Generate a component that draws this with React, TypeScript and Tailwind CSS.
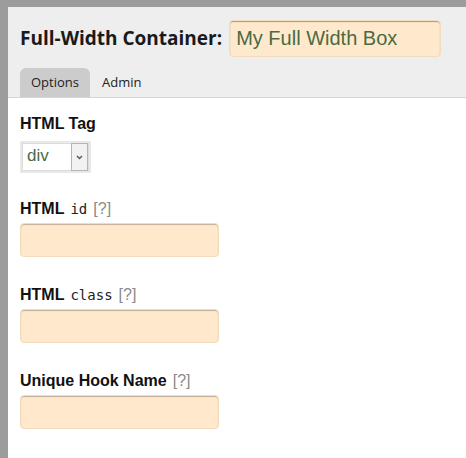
import React from "react";

const arial = { fontFamily: '"Liberation Sans", Arial, sans-serif' };

function Field({ label, mono, help }: { label: React.ReactNode; mono?: string; help?: boolean }) {
  return (
    <div className="flex flex-col">
      <div className="flex items-baseline h-[18px] text-[16px] leading-[18px] font-bold text-[#111]" style={arial}>
        <span>{label}</span>
        {mono && (
          <span className="ml-[6px] font-normal text-[14px] text-[#222]" style={{ fontFamily: '"DejaVu Sans Mono", monospace' }}>
            {mono}
          </span>
        )}
        {help && <span className="ml-[6px] font-normal text-[16px] text-[#8a8a8a]">[?]</span>}
      </div>
      <div className="mt-[5px] w-[199px] h-[34px] rounded-[4px] bg-[#ffe8cc] border border-[#f3dcbc] shadow-[inset_0_1px_1px_rgba(0,0,0,0.25)]" />
    </div>
  );
}

export default function App() {
  return (
    <div className="w-[466px] h-[458px] bg-[#9c9c9c] pl-[8px] pt-[7px] overflow-hidden">
      <div className="w-full h-full bg-white flex flex-col">
        <div className="bg-[#eeeeee] border-b border-[#d6d6d6] pl-[12px] flex flex-col">
          <div className="flex items-center h-[61px] pt-[1px]">
            <span className="text-[19px] font-bold text-[#1a1a1a]" style={{ fontFamily: '"Open Sans", sans-serif' }}>
              Full-Width Container:
            </span>
            <div
              className="ml-[7px] w-[212px] h-[37px] rounded-[4px] bg-[#ffe9cc] border border-[#f2dcbf] shadow-[inset_0_1px_1px_rgba(0,0,0,0.35)] flex items-center pl-[6px] text-[20px] text-[#4a6a45]"
              style={arial}
            >
              My Full Width Box
            </div>
          </div>
          <div className="flex h-[29px] items-end">
            <div className="h-[29px] w-[70px] rounded-t-[6px] bg-[#cccccc] flex items-center justify-center text-[13px] text-[#222]" style={{ fontFamily: '"Open Sans", sans-serif' }}>
              Options
            </div>
            <div className="h-[29px] px-[12px] flex items-center text-[13px] text-[#222]" style={{ fontFamily: '"Open Sans", sans-serif' }}>
              Admin
            </div>
          </div>
        </div>
        <div className="pl-[12px] pt-[17px] flex flex-col">
          <div className="text-[16px] leading-[18px] font-bold text-[#111]" style={arial}>HTML Tag</div>
          <div className="mt-[8px] w-[71px] h-[32px] bg-[#e9e9e9] p-[2px]">
            <div className="w-full h-full bg-white flex items-center border border-[#dcdcdc]">
              <span className="flex-1 pl-[4px] pb-[3px] text-[17px] text-[#4a6a45] leading-none" style={arial}>div</span>
              <div className="w-[17px] h-[28px] border border-[#b5b5b5] bg-[#f2f2f2] flex items-center justify-center">
                <svg width="7" height="5" viewBox="0 0 7 5">
                  <path d="M1 1 L3.5 3.5 L6 1" stroke="#555" strokeWidth="1.4" fill="none" />
                </svg>
              </div>
            </div>
          </div>
          <div className="mt-[27px] flex flex-col gap-[29px]">
            <Field label="HTML" mono="id" help />
            <Field label="HTML" mono="class" help />
            <Field label="Unique Hook Name" help />
          </div>
        </div>
      </div>
    </div>
  );
}
